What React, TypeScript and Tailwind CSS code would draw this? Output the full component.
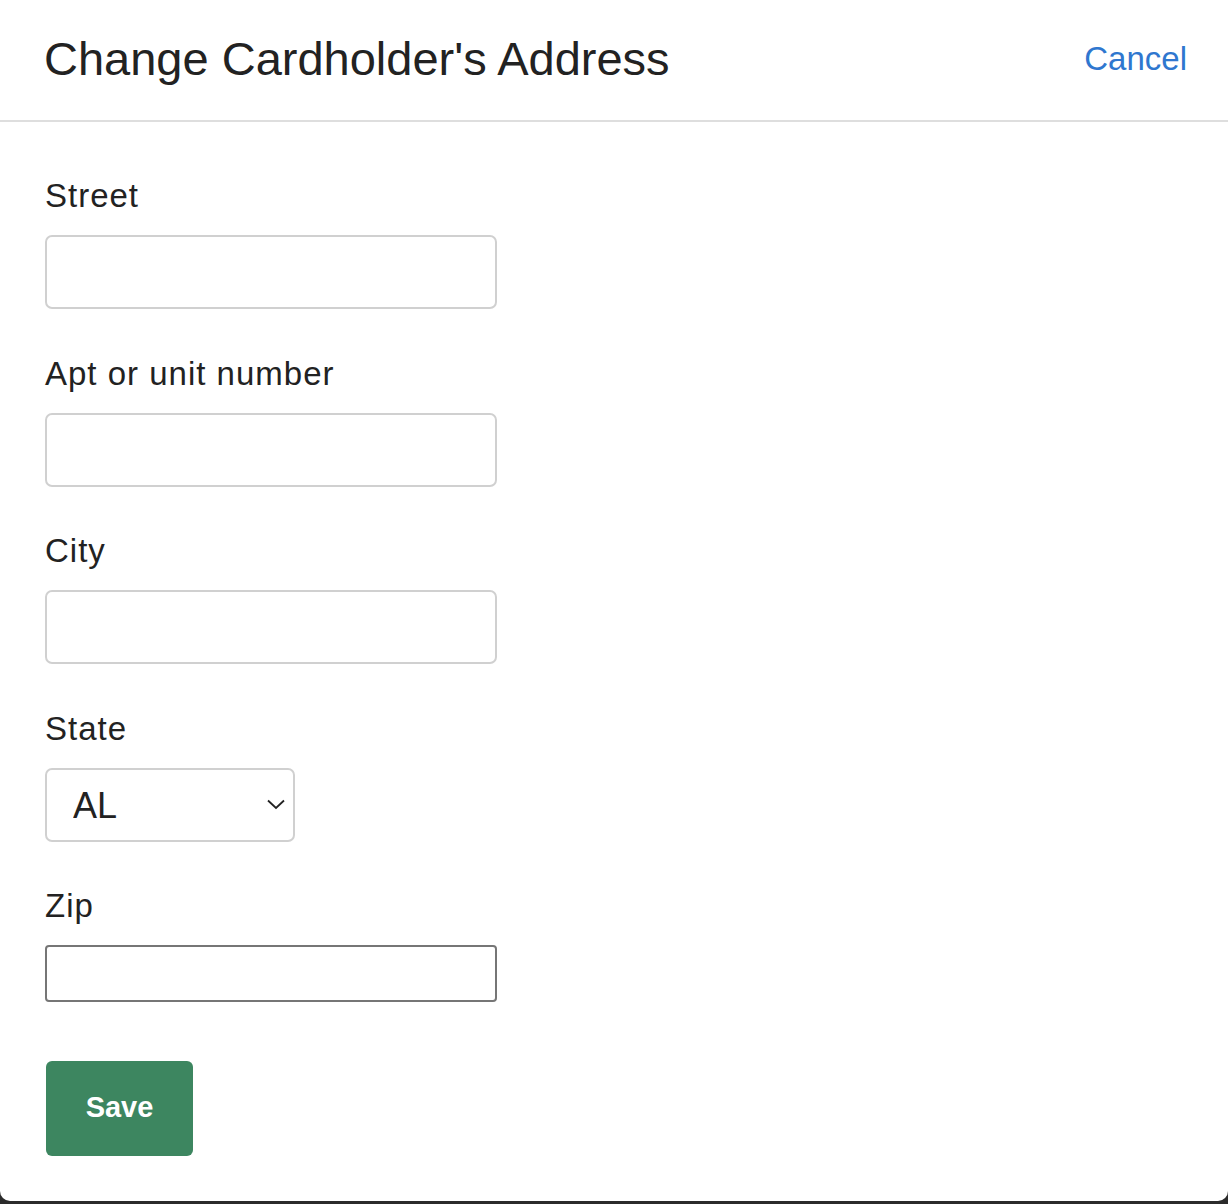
import { useState } from 'react';

const font = { fontFamily: '"Liberation Sans", Arial, sans-serif' };

function TextField({ label, zip = false }: { label: string; zip?: boolean }) {
  const [value, setValue] = useState('');
  return (
    <div className="flex flex-col">
      <label className="text-[33px] leading-none tracking-[1px] text-[#222] mb-[23px]">{label}</label>
      <input
        value={value}
        onChange={e => setValue(e.target.value)}
        className={
          zip
            ? 'w-[452px] h-[57px] border-2 border-[#767676] rounded-[4px] bg-white outline-none px-4 text-[30px]'
            : 'w-[452px] h-[74px] border-2 border-[#d0d0d0] rounded-[7px] bg-white outline-none px-4 text-[30px]'
        }
      />
    </div>
  );
}

export default function App() {
  const [state, setState] = useState('AL');

  return (
    <div className="w-[1228px] h-[1204px] bg-[#2b2b2b]" style={font}>
      <div className="w-full h-[1201px] bg-white rounded-b-[10px] flex flex-col">
        {/* Header */}
        <div className="h-[122px] border-b-2 border-[#dedede] flex items-center justify-between pl-[44px] pr-[41px] shrink-0">
          <h1 className="text-[47px] leading-none text-[#222] pb-[3px]">Change Cardholder's Address</h1>
          <button className="text-[33px] leading-none text-[#2f77cf] pb-[4px]">Cancel</button>
        </div>

        {/* Form */}
        <form className="flex flex-col gap-[47.5px] pl-[45px] pt-[57px]" onSubmit={e => e.preventDefault()}>
          <TextField label="Street" />
          <TextField label="Apt or unit number" />
          <TextField label="City" />

          <div className="flex flex-col">
            <label className="text-[33px] leading-none tracking-[1px] text-[#222] mb-[23px]">State</label>
            <div className="relative w-[250px] h-[74px]">
              <select
                value={state}
                onChange={e => setState(e.target.value)}
                className="appearance-none w-full h-full border-2 border-[#d0d0d0] rounded-[7px] bg-white pl-[26px] pt-[2px] text-[36px] text-[#222] outline-none"
                style={font}
              >
                <option>AL</option>
                <option>AK</option>
                <option>AZ</option>
                <option>CA</option>
                <option>NY</option>
              </select>
              <svg
                className="absolute right-[9px] top-[31px] pointer-events-none"
                width="20"
                height="11"
                viewBox="0 0 20 11"
                fill="none"
              >
                <path d="M2 1.5 L10 9 L18 1.5" stroke="#222" strokeWidth="1.8" />
              </svg>
            </div>
          </div>

          <TextField label="Zip" zip />

          <button
            type="submit"
            className="w-[147px] h-[95px] bg-[#3d8660] rounded-[6px] text-white font-bold text-[29px] ml-px mt-[11px]"
          >
            Save
          </button>
        </form>
      </div>
    </div>
  );
}
